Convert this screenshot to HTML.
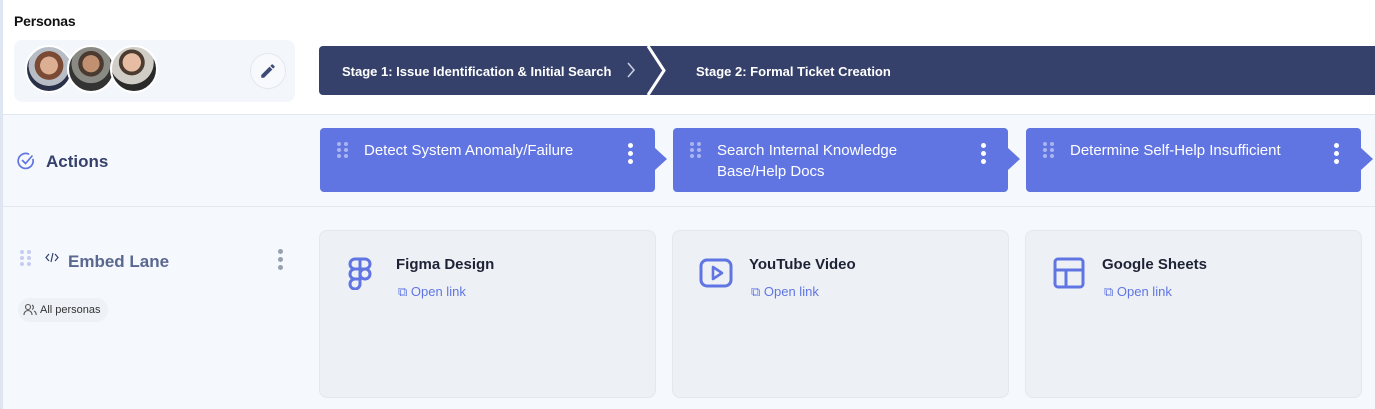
<!DOCTYPE html>
<html><head><meta charset="utf-8"><style>
*{margin:0;padding:0;box-sizing:border-box}
body{width:1375px;height:409px;overflow:hidden;background:#fff;font-family:"Liberation Sans",sans-serif;position:relative}
.a{position:absolute}
.row2{left:0;top:114px;width:1375px;height:93px;background:#f5f8fc;border-top:1px solid #e2e8f0;border-bottom:1px solid #e2e8f0}
.row3{left:0;top:207px;width:1375px;height:202px;background:#f5f8fc}
.card{height:64px;width:335px;top:128px;background:#6075e2;border-radius:4px;color:#fff;font-size:15px;line-height:21px}
.card .t{position:absolute;left:44px;top:12px;width:240px}
.card .arr{position:absolute;right:-12px;top:20px;width:0;height:0;border-top:11px solid transparent;border-bottom:11px solid transparent;border-left:12px solid #6075e2}
.dots6{position:absolute;left:17px;top:14px;width:10px;height:16px}
.dots6 i{position:absolute;width:4px;height:4px;border-radius:50%;background:#a9b4f0}
.kebab{position:absolute;right:22px;top:15px;width:5px}
.kebab i{display:block;width:5px;height:5px;border-radius:50%;background:#fff;margin-bottom:3px}
.emb{top:230px;width:337px;height:168px;background:#edf1f6;border:1px solid #e2e8f0;border-radius:8px}
.emb .ti{position:absolute;left:76px;top:25px;font-size:15px;font-weight:bold;color:#1e2235}
.emb .lk{position:absolute;left:78px;top:53px;font-size:13px;color:#6075e2}
.emb svg.ic{position:absolute;left:26px;top:25px}
.av{width:48px;height:48px;border-radius:50%;border:2px solid #fff;top:45px}
</style></head><body>
<div class="a" style="left:0;top:0;width:3px;height:409px;background:#dfe6f1;z-index:5"></div>
<div class="a" style="left:14px;top:13px;font-size:14px;color:#111;font-weight:bold;letter-spacing:-0.2px">Personas</div>
<div class="a" style="left:14px;top:40px;width:281px;height:62px;background:#f3f6fa;border-radius:8px"></div>
<div class="a av" style="left:25px;background:radial-gradient(circle at 50% 42%,#dcae92 0 26%,#7a4a35 27% 42%,#b8bcc4 43% 60%,#2a3048 61%)"></div>
<div class="a av" style="left:67px;background:radial-gradient(circle at 50% 38%,#c09070 0 24%,#4a3a30 25% 36%,#8a8a84 37% 55%,#333 56%)"></div>
<div class="a av" style="left:110px;background:radial-gradient(circle at 45% 35%,#e6bca2 0 24%,#4a3a30 25% 34%,#d0ccc6 35% 58%,#2a2a2a 59%)"></div>
<div class="a" style="left:250px;top:53px;width:36px;height:36px;border-radius:50%;border:1px solid #e3e7f0;background:#f7f9fc">
<svg width="18" height="18" viewBox="0 0 24 24" style="position:absolute;left:8px;top:8px"><path d="M3 17.25V21h3.75L17.8 9.94l-3.75-3.75L3 17.25zM20.7 7.04a1 1 0 000-1.41l-2.34-2.34a1 1 0 00-1.41 0l-1.83 1.83 3.75 3.75 1.83-1.83z" fill="#3d4a75"/></svg></div>
<div class="a" style="left:319px;top:46px;width:1056px;height:49px;background:#35416b;border-radius:4px 0 0 4px"></div>
<svg class="a" style="left:640px;top:46px" width="30" height="49"><polyline points="8,0 24,24.5 8,49" fill="none" stroke="#fff" stroke-width="3"/></svg>
<div class="a" style="left:342px;top:64px;font-size:13px;font-weight:bold;color:#fff">Stage 1: Issue Identification &amp; Initial Search</div>
<svg class="a" style="left:626px;top:62px" width="10" height="16"><polyline points="2,1 8,8 2,15" fill="none" stroke="#c7cde0" stroke-width="1.6"/></svg>
<div class="a" style="left:696px;top:64px;font-size:13px;font-weight:bold;color:#fff">Stage 2: Formal Ticket Creation</div>
<div class="a row2"></div>
<div class="a row3"></div>
<svg class="a" style="left:16px;top:151px" width="20" height="20" viewBox="0 0 20 20"><path d="M17 8.5A7.5 7.5 0 1 1 12.5 3" fill="none" stroke="#6075e2" stroke-width="1.7" stroke-linecap="round"/><polyline points="6.5,9.5 9.5,12.5 16,5" fill="none" stroke="#6075e2" stroke-width="1.7" stroke-linecap="round"/></svg>
<div class="a" style="left:46px;top:152px;font-size:17px;font-weight:bold;color:#35416b">Actions</div>
<div class="a dots6" style="left:20px;top:250px"><i style="left:0;top:0;background:#c6cdf3"></i><i style="left:7px;top:0;background:#c6cdf3"></i><i style="left:0;top:6px;background:#c6cdf3"></i><i style="left:7px;top:6px;background:#c6cdf3"></i><i style="left:0;top:12px;background:#c6cdf3"></i><i style="left:7px;top:12px;background:#c6cdf3"></i></div>
<svg class="a" style="left:45px;top:252px" width="14" height="11" viewBox="0 0 14 11"><path d="M4 2L1 5.5 4 9M10 2l3 3.5L10 9M8 1L6 10" fill="none" stroke="#35416b" stroke-width="1.2"/></svg>
<div class="a" style="left:68px;top:252px;font-size:17px;font-weight:bold;color:#5a6890">Embed Lane</div>
<div class="a" style="left:278px;top:249px"><div style="width:5px;height:5px;border-radius:50%;background:#98a0b0;margin-bottom:3px"></div><div style="width:5px;height:5px;border-radius:50%;background:#98a0b0;margin-bottom:3px"></div><div style="width:5px;height:5px;border-radius:50%;background:#98a0b0"></div></div>
<div class="a" style="left:18px;top:298px;width:90px;height:24px;border-radius:12px;background:#eef1f5;font-size:11px;color:#333;padding:6px 0 0 22px">All personas</div>
<svg class="a" style="left:23px;top:303px" width="14" height="14" viewBox="0 0 14 14"><circle cx="5" cy="4" r="2.5" fill="none" stroke="#555" stroke-width="1.1"/><path d="M1 12c0-3 2-4.5 4-4.5s4 1.5 4 4.5" fill="none" stroke="#555" stroke-width="1.1"/><path d="M9 2a2.5 2.5 0 010 4.5M11 8c1.5.6 2.2 2 2.2 4" fill="none" stroke="#555" stroke-width="1.1"/></svg>

<div class="a card" style="left:320px"><div class="dots6"><i style="left:0;top:0"></i><i style="left:7px;top:0"></i><i style="left:0;top:6px"></i><i style="left:7px;top:6px"></i><i style="left:0;top:12px"></i><i style="left:7px;top:12px"></i></div><div class="t">Detect System Anomaly/Failure</div><div class="kebab"><i></i><i></i><i></i></div><div class="arr"></div></div>
<div class="a card" style="left:673px"><div class="dots6"><i style="left:0;top:0"></i><i style="left:7px;top:0"></i><i style="left:0;top:6px"></i><i style="left:7px;top:6px"></i><i style="left:0;top:12px"></i><i style="left:7px;top:12px"></i></div><div class="t">Search Internal Knowledge Base/Help Docs</div><div class="kebab"><i></i><i></i><i></i></div><div class="arr"></div></div>
<div class="a card" style="left:1026px"><div class="dots6"><i style="left:0;top:0"></i><i style="left:7px;top:0"></i><i style="left:0;top:6px"></i><i style="left:7px;top:6px"></i><i style="left:0;top:12px"></i><i style="left:7px;top:12px"></i></div><div class="t" style="width:260px">Determine Self-Help Insufficient</div><div class="kebab"><i></i><i></i><i></i></div><div class="arr"></div></div>

<div class="a emb" style="left:319px"><svg class="ic" width="28" height="34" viewBox="0 0 28 34"><g fill="none" stroke="#6075e2" stroke-width="3"><path d="M14 3H9a5 5 0 000 10h5zM14 3h5a5 5 0 010 10h-5zM14 13H9a5 5 0 000 10h5zM14 23H9a5 5 0 105 5z"/><circle cx="19" cy="18" r="5"/></g></svg><div class="ti">Figma Design</div><div class="lk">⧉ Open link</div></div>
<div class="a emb" style="left:672px"><svg class="ic" width="36" height="34" viewBox="0 0 36 34"><rect x="2" y="4" width="30" height="26" rx="6" fill="none" stroke="#6075e2" stroke-width="3"/><path d="M14 11v12l9-6z" fill="none" stroke="#6075e2" stroke-width="2.6" stroke-linejoin="round"/></svg><div class="ti">YouTube Video</div><div class="lk">⧉ Open link</div></div>
<div class="a emb" style="left:1025px"><svg class="ic" width="34" height="34" viewBox="0 0 34 34"><rect x="3" y="3" width="28" height="28" rx="3" fill="none" stroke="#6075e2" stroke-width="3"/><path d="M3 14h28M14 14v17" stroke="#6075e2" stroke-width="3"/></svg><div class="ti">Google Sheets</div><div class="lk">⧉ Open link</div></div>
</body></html>
